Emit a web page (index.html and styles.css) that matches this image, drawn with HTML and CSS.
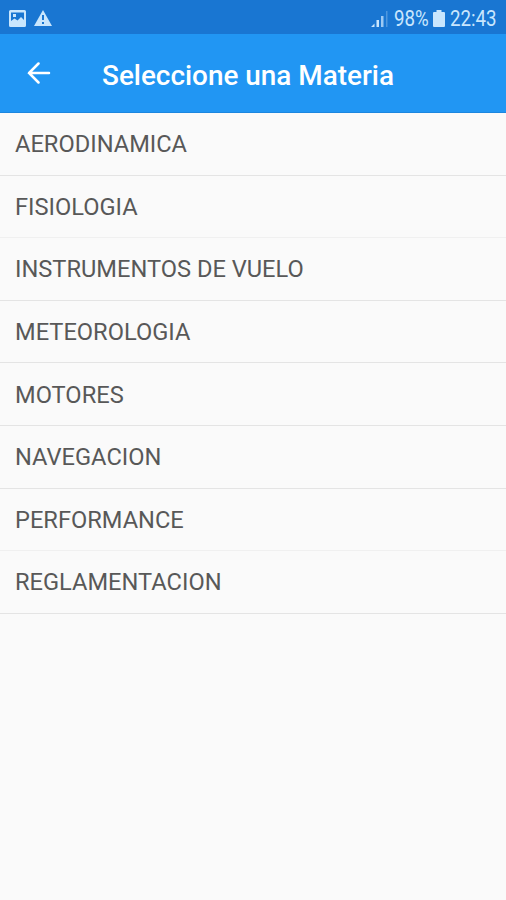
FILE: index.html
```html
<!DOCTYPE html>
<html lang="es">
<head>
<meta charset="utf-8">
<title>Seleccione una Materia</title>
<link rel="stylesheet" href="styles.css">
</head>
<body>
<div class="status">
  <svg class="picture" width="17" height="17" viewBox="0 0 17 17"><path fill-rule="evenodd" d="M1.500 0h14q1.500 0 1.500 1.500v14q0 1.500-1.500 1.500h-14Q0 17 0 15.500v-14Q0 0 1.500 0zM2 2.500V11l3.500-2.500 3 2L12 7l3 3V2.500zm2 1.500h3v3H4z"/></svg>
  <svg class="warning" width="18" height="16" viewBox="0 0 18 16"><path fill-rule="evenodd" d="M9 0l9 16H0zM8 5v5h2V5zm0 7v2h2v-2z"/></svg>
  <svg class="signal" width="17" height="17" viewBox="0 0 17 17"><path d="M3.500 13.500V17H0zM5.500 10h2.500v7H5.500z"/><path class="mid" d="M10 6h2.500v11H10z"/><path class="faint" d="M15 1h1.500v16H15z"/></svg>
  <span class="percent">98%</span>
  <svg class="battery" width="12" height="17" viewBox="0 0 12 17"><path d="M3.500 0h5v2H11q1 0 1 1v13q0 1-1 1H1q-1 0-1-1V3q0-1 1-1h2.500z"/></svg>
  <span class="clock">22:43</span>
</div>
<header class="bar">
  <svg class="back" width="24" height="22" viewBox="0 0 24 22"><path d="M22 11H2M11.500 1.500 2 11l9.500 9.500"/></svg>
  <h1 class="title">Seleccione una Materia</h1>
</header>
<ul class="list">
  <li><span>AERODINAMICA</span></li>
  <li class="soft"><span>FISIOLOGIA</span></li>
  <li><span>INSTRUMENTOS DE VUELO</span></li>
  <li><span>METEOROLOGIA</span></li>
  <li><span>MOTORES</span></li>
  <li><span>NAVEGACION</span></li>
  <li class="soft"><span>PERFORMANCE</span></li>
  <li><span>REGLAMENTACION</span></li>
</ul>
</body>
</html>
```
FILE: styles.css
```css
* { box-sizing: border-box; }
body { margin: 0; height: 900px; background: #fafafa; font-family: Roboto, sans-serif; overflow: hidden; }
.status { height: 34px; padding: 3px 10px 0 9px; background: #1976d2; color: #c9e6fd; display: flex; align-items: center; font-size: 21.500px; }
.status svg { fill: #c9e6fd; flex: none; }
.warning { margin-left: 8px; margin-bottom: 2px; }
.picture { margin-bottom: 1px; }
.signal { margin-left: auto; }
.mid { opacity: .75; }
.faint { opacity: .3; }
.percent, .clock { transform: scaleX(.87); transform-origin: left; white-space: nowrap; }
.percent { margin-left: 6px; width: 35px; }
.battery { margin: 0 5px 0 4px; }
.clock { width: 46px; }
.bar { height: 79px; background: #2196f3; border-bottom: 1px solid #1c86df; display: flex; align-items: center; padding-left: 27px; }
.back { fill: none; stroke: #fff; stroke-width: 2.500; stroke-linecap: round; }
.title { margin: 5px 0 0 51px; font-size: 27.900px; line-height: 34px; font-weight: 500; color: #fff; white-space: nowrap; }
.list { margin: 0; padding: 0; list-style: none; }
.list li { height: 62.600px; padding: 1px 0 0 15px; display: flex; align-items: center; border-bottom: 1px solid #e4e4e4; font-size: 23.650px; color: #585858; white-space: nowrap; }
.list .soft { border-color: #f0f0f0; }
```
